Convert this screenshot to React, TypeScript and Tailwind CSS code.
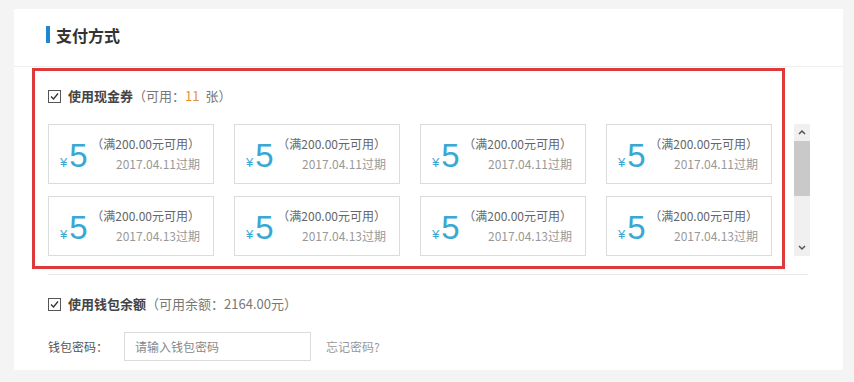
import React from 'react'

const coupons = [
  { amount: 5, limit: '200.00', expire: '2017.04.11' },
  { amount: 5, limit: '200.00', expire: '2017.04.11' },
  { amount: 5, limit: '200.00', expire: '2017.04.11' },
  { amount: 5, limit: '200.00', expire: '2017.04.11' },
  { amount: 5, limit: '200.00', expire: '2017.04.13' },
  { amount: 5, limit: '200.00', expire: '2017.04.13' },
  { amount: 5, limit: '200.00', expire: '2017.04.13' },
  { amount: 5, limit: '200.00', expire: '2017.04.13' },
]

function CheckBox() {
  return (
    <svg width="13" height="13" viewBox="0 0 13 13" className="shrink-0">
      <rect x="0.5" y="0.5" width="12" height="12" fill="#fff" stroke="#555" />
      <path d="M3 6.5 L5.5 9 L10 3.5" fill="none" stroke="#333" strokeWidth="1.3" />
    </svg>
  )
}

function Coupon({ amount, limit, expire }: { amount: number; limit: string; expire: string }) {
  return (
    <div className="flex h-[60px] w-[166px] items-center border border-[#dcdcdc] bg-white pl-[11px] pr-[13px]">
      <div className="mt-[3px] flex items-baseline text-[#39a8d2]" style={{ fontFamily: '"Liberation Sans", Arial, sans-serif' }}>
        <span className="text-[13px]">¥</span>
        <span className="ml-[2px] text-[33px] leading-none">{amount}</span>
      </div>
      <div className="ml-auto flex flex-col items-end text-[12px] leading-[20px]">
        <span className="text-[#666]">（满{limit}元可用）</span>
        <span className="text-[#999]">{expire}过期</span>
      </div>
    </div>
  )
}

export default function App() {
  return (
    <div
      className="min-h-screen bg-[#f4f4f4] pl-[14px] pt-[9px]"
      style={{ fontFamily: '"Noto Sans CJK SC", "Liberation Sans", sans-serif' }}
    >
      <div className="relative h-[361px] w-[829px] bg-white">
        <div className="flex h-[58px] items-center border-b border-[#eeeeee] pb-[6px] pl-[32px]">
          <span className="h-[17px] w-[4px] bg-[#1d87d0]" />
          <span className="ml-[6px] text-[16px] font-bold text-[#333]">支付方式</span>
        </div>

        <div className="ml-[34px] w-[760px] border-b border-[#e8e8e8] pb-[18px]">
          <div className="mt-[22px] flex h-[14px] items-center text-[13px]">
            <CheckBox />
            <span className="ml-[7px] font-bold text-[#444]">使用现金券</span>
            <span className="text-[#777]">（可用：</span>
            <span className="text-[#e8923a]">11</span>
            <span className="ml-[6px] text-[#777]">张）</span>
          </div>

          <div className="mt-[21px] flex">
            <div className="grid grid-cols-[repeat(4,166px)] gap-x-[20px] gap-y-[12px]">
              {coupons.map((c, i) => (
                <Coupon key={i} {...c} />
              ))}
            </div>
            <div className="ml-[22px] flex h-[132px] w-[16px] flex-col items-center bg-[#f0f0f0]">
              <svg width="16" height="17" viewBox="0 0 16 17">
                <path d="M5 10 L8 7 L11 10" fill="none" stroke="#555" strokeWidth="1.5" />
              </svg>
              <div className="h-[55px] w-[16px] bg-[#c9c9c9]" />
              <div className="flex-1" />
              <svg width="16" height="17" viewBox="0 0 16 17">
                <path d="M5 7 L8 10 L11 7" fill="none" stroke="#555" strokeWidth="1.5" />
              </svg>
            </div>
          </div>
        </div>

        <div className="ml-[34px]">
          <div className="mt-[22px] flex h-[14px] items-center text-[13px]">
            <CheckBox />
            <span className="ml-[7px] font-bold text-[#444]">使用钱包余额</span>
            <span className="text-[#777]">（可用余额：2164.00元）</span>
          </div>

          <div className="mt-[21px] flex h-[29px] items-center text-[12px]">
            <span className="w-[76px] text-[#555]">钱包密码：</span>
            <input
              className="h-[29px] w-[187px] border border-[#dcdcdc] px-[10px] text-[12px] outline-none placeholder:text-[#888]"
              placeholder="请输入钱包密码"
            />
            <span className="ml-[15px] text-[#999]">忘记密码?</span>
          </div>
        </div>

        <div className="pointer-events-none absolute left-[18px] top-[59px] h-[201px] w-[753px] border-[3px] border-[#dd3b3b]" />
      </div>
    </div>
  )
}
